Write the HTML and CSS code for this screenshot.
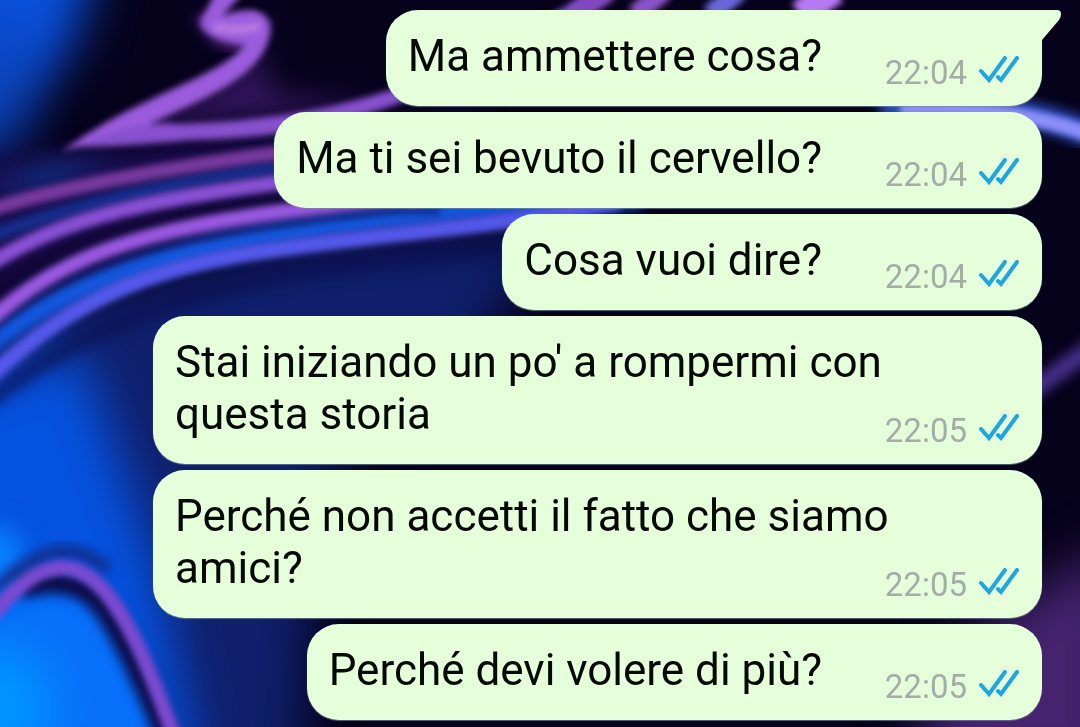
FILE: index.html
```
<!DOCTYPE html>
<html lang="it">
<head>
  <meta charset="UTF-8" />
  <meta name="viewport" content="width=device-width, initial-scale=1.0" />
  <title>Chat</title>
  <link rel="stylesheet" href="styles.css">
</head>
<body>

  <svg class="wallpaper" viewBox="0 0 1080 727" preserveAspectRatio="xMidYMid slice" aria-hidden="true">
    <defs>
      <filter id="blur3" x="-20%" y="-20%" width="140%" height="140%"><feGaussianBlur stdDeviation="3" /></filter>
      <filter id="blur6" x="-30%" y="-30%" width="160%" height="160%"><feGaussianBlur stdDeviation="6" /></filter>
      <filter id="blur12" x="-40%" y="-40%" width="180%" height="180%"><feGaussianBlur stdDeviation="12" /></filter>
      <filter id="blur25" x="-60%" y="-60%" width="220%" height="220%"><feGaussianBlur stdDeviation="25" /></filter>
    </defs>
    <rect width="1080" height="727" fill="#06021c" />

    <!-- soft colour fields -->
    <g filter="url(#blur25)">
      <path d="M-60 -60H100L75 40L20 110L-60 190Z" fill="#0a52e0" />
      <path d="M-60 330L120 290L300 245L560 230L480 340L320 480L300 780H-60Z" fill="#0f1f6c" />
      <path d="M-60 400L80 350L120 460L155 560L200 780H-60Z" fill="#0552e0" />
      <path d="M960 640L1120 540V780H900Z" fill="#45236e" />
    </g>
    <ellipse cx="0" cy="90" rx="35" ry="90" fill="#0c3aa4" opacity="0.5" filter="url(#blur25)" />
    <path d="M-20 160L160 145L480 115V230L150 250L-20 330Z" fill="#190b4a" filter="url(#blur12)" />
    <path d="M-20 190L50 165L120 160L40 186Z" fill="#0b3a94" filter="url(#blur12)" />

    <!-- upper swirl -->
    <path d="M262 15Q285 50 210 90L130 130L380 105L270 90Z" fill="#4a2080" opacity="0.6" filter="url(#blur12)" />
    <path d="M200 15Q230 70 268 20" fill="none" stroke="#5a2a8e" stroke-width="14" opacity="0.7" filter="url(#blur6)" />
    <g filter="url(#blur3)">
      <path d="M216 -8H244L222 16Q235 10 252 10Q274 14 269 38C260 74 215 94 165 117Q125 136 62 151Q105 120 150 100C198 77 233 63 245 44Q236 46 218 39Q193 28 204 14Z" fill="#9a5cdc" />
      <path d="M75 147Q140 118 180 124Q300 120 390 90L500 43L590 -7H614L522 55L400 103Q300 139 190 140Q120 147 75 147Z" fill="#8850ce" />
      <path d="M214 27Q240 32 260 26" stroke="#b87ae0" stroke-width="9" fill="none" />
    </g>
    <g fill="none" stroke-width="20" filter="url(#blur3)">
      <path d="M575 15L610 -10" stroke="#8048c0" />
      <path d="M635 15L665 -10" stroke="#8a52c8" />
      <path d="M710 15L740 -10" stroke="#6a68d8" />
      <path d="M800 15L835 -10" stroke="#b878f4" stroke-width="28" />
    </g>

    <!-- ribbons -->
    <g fill="none" filter="url(#blur6)">
      <path d="M-20 240Q120 187 300 165" stroke="#143fae" stroke-width="10" />
      <path d="M-20 303Q100 222 300 200" stroke="#0c0634" stroke-width="14" />
      <path d="M-20 349Q100 258 300 230T640 196" stroke="#1458e0" stroke-width="24" />
      <path d="M-20 408Q120 298 300 272T560 238" stroke="#0c0f50" stroke-width="16" opacity="0.6" />
    </g>
    <g fill="none" filter="url(#blur3)">
      <path d="M-20 213Q110 170 400 138" stroke="#78399e" stroke-width="14" />
      <path d="M-20 270C60 218 140 196 400 168" stroke="#8850d4" stroke-width="15" />
      <path d="M-20 292C60 238 150 219 300 199" stroke="#120738" stroke-width="9" />
      <path d="M-20 329C60 254 140 230 300 209S380 203 420 198" stroke="#9858e0" stroke-width="15" />
      <path d="M-20 343C60 268 140 244 300 223S400 215 440 211" stroke="#0e0d4c" stroke-width="6" opacity="0.6" />
      <path d="M-20 386C80 290 160 264 300 246S480 228 620 202" stroke="#5458ea" stroke-width="16" />
    </g>

    <!-- lower left arc -->
    <path d="M-20 615Q70 560 115 625L172 750H-20Z" fill="#0870fa" filter="url(#blur12)" />
    <ellipse cx="0" cy="710" rx="50" ry="65" fill="#0096ff" filter="url(#blur25)" />
    <ellipse cx="-4" cy="560" rx="28" ry="35" fill="#0880ff" filter="url(#blur12)" />
    <path d="M20 588C60 575 90 585 108 614S148 690 168 740" fill="none" stroke="#0d0c48" stroke-width="22" filter="url(#blur6)" />
    <path d="M-5 590Q60 525 108 570" fill="none" stroke="#142a86" stroke-width="12" filter="url(#blur6)" />
    <path d="M-12 621C40 553 80 553 115 605C142 645 158 695 176 740" fill="none" stroke="#7a4ad0" stroke-width="15" filter="url(#blur3)" />

    <!-- right edge -->
    <path d="M880 108Q1000 95 1100 138" fill="none" stroke="#2c49b8" stroke-width="26" filter="url(#blur6)" />
    <path d="M900 109Q1010 103 1100 138" fill="none" stroke="#8c90fa" stroke-width="15" filter="url(#blur3)" />
    <path d="M1020 399L1100 342" fill="none" stroke="#44308a" stroke-width="18" filter="url(#blur6)" />
  </svg>

  <svg class="sprite" aria-hidden="true">
    <symbol id="ticks" viewBox="0 0 42 28">
      <path d="M3 15L11 24L27 2M20 21L23 24L39 2" fill="none" stroke="#1fa5e0" stroke-width="4" stroke-linecap="round" stroke-linejoin="miter" />
    </symbol>
  </svg>

  <main class="chat">
    <div class="bubble first">
      <p class="text">Ma ammettere cosa?<span class="spacer"></span></p>
      <div class="meta"><time>22:04</time><svg class="ticks" role="img" aria-label="Letto"><use href="#ticks" /></svg></div>
      <svg class="tail" viewBox="0 0 20 32" aria-hidden="true"><path d="M0 0H15Q19 0 19 4Q19 7 17 10L0 30Z" fill="#e5ffdb" /></svg>
    </div>
    <div class="bubble">
      <p class="text">Ma ti sei bevuto il cervello?<span class="spacer"></span></p>
      <div class="meta"><time>22:04</time><svg class="ticks" role="img" aria-label="Letto"><use href="#ticks" /></svg></div>
    </div>
    <div class="bubble">
      <p class="text">Cosa vuoi dire?<span class="spacer"></span></p>
      <div class="meta"><time>22:04</time><svg class="ticks" role="img" aria-label="Letto"><use href="#ticks" /></svg></div>
    </div>
    <div class="bubble">
      <p class="text">Stai iniziando un po' a rompermi con questa storia<span class="spacer"></span></p>
      <div class="meta"><time>22:05</time><svg class="ticks" role="img" aria-label="Letto"><use href="#ticks" /></svg></div>
    </div>
    <div class="bubble">
      <p class="text">Perché non accetti il fatto che siamo amici?<span class="spacer"></span></p>
      <div class="meta"><time>22:05</time><svg class="ticks" role="img" aria-label="Letto"><use href="#ticks" /></svg></div>
    </div>
    <div class="bubble">
      <p class="text">Perché devi volere di più?<span class="spacer"></span></p>
      <div class="meta"><time>22:05</time><svg class="ticks" role="img" aria-label="Letto"><use href="#ticks" /></svg></div>
    </div>
  </main>

</body>
</html>
```
FILE: styles.css
```
* {
  box-sizing: border-box;
}

body {
  margin: 0;
  background: #06021c;
  font-family: Roboto, "Liberation Sans", sans-serif;
}

.wallpaper {
  position: fixed;
  inset: 0;
  width: 100%;
  height: 100%;
  z-index: -1;
}

.wallpaper filter {
  color-interpolation-filters: sRGB;
}

.wallpaper feGaussianBlur {
  color-interpolation-filters: sRGB;
}

.sprite {
  display: none;
}

.chat {
  display: flex;
  flex-direction: column;
  align-items: flex-end;
  gap: 6px;
  padding: 10px 38px 6px 153px;
}

/* text and meta share one grid cell, the spacer keeps them apart */
.bubble {
  position: relative;
  display: grid;
  padding: 20px 22px 24px;
  border-radius: 32px;
  background: #e5ffdb;
  box-shadow: 0 1px 1px rgba(120, 140, 150, 0.7);
}

.bubble.first {
  border-top-right-radius: 0;
}

.text {
  grid-area: 1 / 1;
  margin: 0;
  font-size: 44px;
  line-height: 52px;
  color: #050805;
}

.spacer {
  display: inline-block;
  width: 198px;
}

.meta {
  grid-area: 1 / 1;
  place-self: end;
  display: flex;
  align-items: center;
  gap: 11px;
  height: 32px;
  margin-bottom: -4px;
  font-size: 33px;
  line-height: 32px;
  color: #a3aca6;
}

.meta time {
  padding-top: 6px;
}

.ticks {
  width: 42px;
  height: 28px;
}

.tail {
  position: absolute;
  top: 0;
  left: 100%;
  width: 20px;
  height: 32px;
}
```
